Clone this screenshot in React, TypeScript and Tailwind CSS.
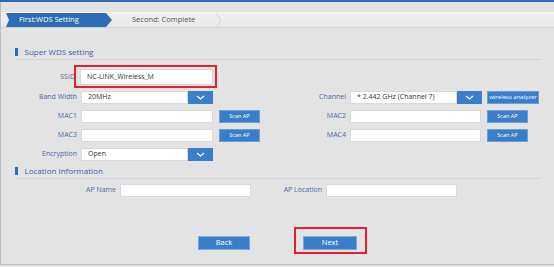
import React from "react";

function Field({ w = 131, value, h = 13 }: { w?: number; value?: string; h?: number }) {
  return (
    <div
      className="bg-white border border-[#d9d9d9] flex items-center pl-[6px] text-[7px] text-[#333]"
      style={{ width: w, height: h }}
    >
      {value}
    </div>
  );
}

function Select({ w = 131, value }: { w?: number; value: string }) {
  return (
    <div className="flex h-[13px]" style={{ width: w }}>
      <div className="flex-1 bg-white border border-[#d9d9d9] flex items-center pl-[6px] text-[7px] text-[#333]">
        {value}
      </div>
      <div className="w-[25px] bg-[#3a7dc9] flex items-center justify-center">
        <svg width="9" height="5" viewBox="0 0 9 5">
          <polyline points="1,1 4.5,4 8,1" fill="none" stroke="#fff" strokeWidth="1.2" />
        </svg>
      </div>
    </div>
  );
}

function Btn({ w, children }: { w: number; children: React.ReactNode }) {
  return (
    <div
      className="h-[13px] bg-[#3a7dc9] border border-[#6b9fd9] text-white text-[5.5px] flex items-center justify-center whitespace-nowrap"
      style={{ width: w }}
    >
      {children}
    </div>
  );
}

function Label({ w, children }: { w: number; children: React.ReactNode }) {
  return (
    <div className="text-right text-[7px] text-[#4d6c9f] pr-[4px] whitespace-nowrap" style={{ width: w }}>
      {children}
    </div>
  );
}

function Heading({ children }: { children: React.ReactNode }) {
  return (
    <div className="ml-[14px] w-[526px] border-b border-[#d2d3da] pb-[2px] flex items-center">
      <div className="w-[2.5px] h-[8px] bg-[#2f6db5]" />
      <span className="ml-[7px] text-[8px] text-[#3a64a8] leading-[10px]">{children}</span>
    </div>
  );
}

export default function App() {
  return (
    <div className="w-[554px] h-[267px] bg-[#e3e3e3] font-['Open_Sans',sans-serif] overflow-hidden">
      <div className="h-[2px] bg-[#2f6db5]" />
      <div className="h-[263px] border-l border-b border-[#bdbdbd] flex flex-col">
        {/* step tabs */}
        <div className="mt-[10px] h-[16px] border-t border-t-[#f5f5f5] border-b border-b-[#d4d4d4] bg-gradient-to-b from-[#f1f1f1] to-[#e9e9e9] flex items-stretch">
          <div className="ml-[5px] w-[106px] bg-[#2e6db6] text-white text-[7.5px] flex items-center pl-[13px] [clip-path:polygon(0_0,100px_0,100%_50%,100px_100%,0_100%,3px_50%)]">
            First:WDS Setting
          </div>
          <div className="ml-[20px] text-[7.5px] text-[#555] flex items-center">Second: Complete</div>
          <svg className="ml-[20px]" width="7" height="15" viewBox="0 0 7 15">
            <polyline points="1,0 6,7.5 1,15" fill="none" stroke="#d0d0d0" strokeWidth="1" />
          </svg>
        </div>

        {/* Super WDS setting */}
        <div className="mt-[19px]">
          <Heading>Super WDS setting</Heading>
        </div>

        <div className="mt-[9px] ml-[14px] flex items-center h-[16px]">
          <Label w={64}>SSID</Label>
          <div className="relative ml-[1px]">
            <Field w={133} h={16} value="NC-LINK_Wireless_M" />
            <div className="absolute left-[-6px] right-[-4px] top-[-4px] bottom-[-3px] border-[2.5px] border-[#e5202a]" />
          </div>
        </div>

        <div className="mt-[6px] ml-[14px] flex items-center h-[13px]">
          <div className="w-[276px] flex items-center">
            <Label w={66}>Band Width</Label>
            <Select w={132} value="20MHz" />
          </div>
          <Label w={59}>Channel</Label>
          <Select w={132} value="* 2.442 GHz (Channel 7)" />
          <div className="ml-[5px]">
            <Btn w={52}>
              <span className="text-[6px]">wireless analyzer</span>
            </Btn>
          </div>
        </div>

        <div className="mt-[6px] ml-[14px] flex items-center h-[13px]">
          <div className="w-[276px] flex items-center">
            <Label w={66}>MAC1</Label>
            <Field w={132} />
            <div className="ml-[6px]">
              <Btn w={41}>Scan AP</Btn>
            </div>
          </div>
          <Label w={59}>MAC2</Label>
          <Field w={131} />
          <div className="ml-[6px]">
            <Btn w={41}>Scan AP</Btn>
          </div>
        </div>

        <div className="mt-[5.5px] ml-[14px] flex items-center h-[13px]">
          <div className="w-[276px] flex items-center">
            <Label w={66}>MAC3</Label>
            <Field w={132} />
            <div className="ml-[6px]">
              <Btn w={41}>Scan AP</Btn>
            </div>
          </div>
          <Label w={59}>MAC4</Label>
          <Field w={131} />
          <div className="ml-[6px]">
            <Btn w={41}>Scan AP</Btn>
          </div>
        </div>

        <div className="mt-[6px] ml-[14px] flex items-center h-[13px]">
          <Label w={66}>Encryption</Label>
          <Select w={132} value="Open" />
        </div>

        {/* Location Information */}
        <div className="mt-[5px]">
          <Heading>Location Information</Heading>
        </div>

        <div className="mt-[5px] ml-[14px] flex items-center h-[13px]">
          <div className="w-[238px] flex items-center">
            <Label w={105}>AP Name</Label>
            <Field w={131} />
          </div>
          <Label w={73}>AP Location</Label>
          <Field w={131} />
        </div>

        {/* Buttons */}
        <div className="mt-[39px] flex items-center">
          <div className="ml-[197px] w-[52px] h-[14px] bg-[#3a7dc9] border border-[#7aa7dd] text-white text-[7.5px] flex items-center justify-center">
            Back
          </div>
          <div className="relative ml-[53px]">
            <div className="w-[54px] h-[14px] bg-[#3a7dc9] border border-[#7aa7dd] text-white text-[7.5px] flex items-center justify-center">
              Next
            </div>
            <div className="absolute left-[-9px] right-[-10px] top-[-9px] bottom-[-4px] border-[2.5px] border-[#e5202a]" />
          </div>
        </div>
      </div>
    </div>
  );
}
